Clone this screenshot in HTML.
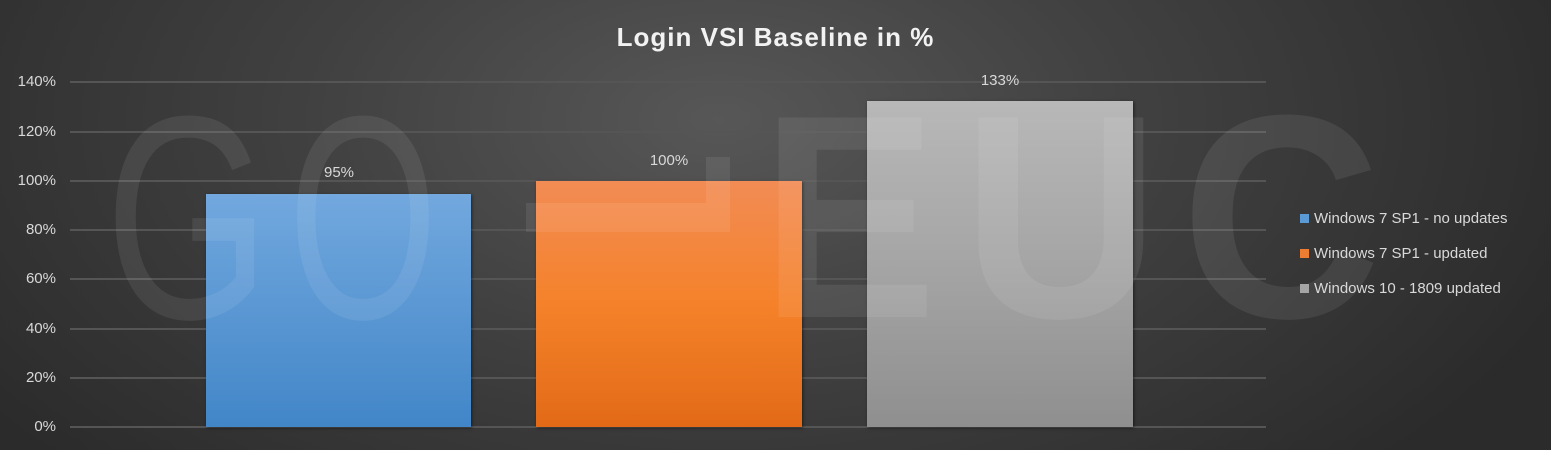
<!DOCTYPE html>
<html><head><meta charset="utf-8"><style>
body{margin:0;width:1551px;height:450px;overflow:hidden;font-family:"Liberation Sans",sans-serif}
#c{position:relative;width:1551px;height:450px;background:radial-gradient(ellipse 900px 500px at 720px 120px,#575757 0%,#414141 45%,#2b2b2b 100%)}
.g{position:absolute;left:70px;width:1196px;height:2px;background:#555}
.y{position:absolute;left:0;width:56px;text-align:right;color:#d9d9d9;font-size:15px}
.b{position:absolute;box-shadow:1px 1px 3px rgba(0,0,0,.5)}
.l{position:absolute;color:#d9d9d9;font-size:15px;text-align:center;width:266px}
.lg{position:absolute;left:1300px;color:#d9d9d9;font-size:15px}
.lg i{display:inline-block;width:9px;height:9px;margin-right:5px;vertical-align:0}
</style></head><body><div id="c">
<div style="position:absolute;left:0;top:22px;width:1551px;text-align:center;color:#f2f2f2;font-size:26px;font-weight:bold;letter-spacing:1px">Login VSI Baseline in %</div>
<div class="g" style="top:81px"></div><div class="g" style="top:131px"></div><div class="g" style="top:180px"></div><div class="g" style="top:229px"></div><div class="g" style="top:278px"></div><div class="g" style="top:328px"></div><div class="g" style="top:377px"></div><div class="g" style="top:426px"></div>
<div class="y" style="top:73px">140%</div><div class="y" style="top:123px">120%</div><div class="y" style="top:172px">100%</div><div class="y" style="top:221px">80%</div><div class="y" style="top:270px">60%</div><div class="y" style="top:320px">40%</div><div class="y" style="top:369px">20%</div><div class="y" style="top:418px">0%</div>
<div class="b" style="left:206px;top:194px;width:265px;height:233px;background:linear-gradient(#72a8de,#4286c8)"></div>
<div class="b" style="left:536px;top:181px;width:266px;height:246px;background:linear-gradient(#f28c55,#f5822a 50%,#e26a17)"></div>
<div class="b" style="left:867px;top:101px;width:266px;height:326px;background:linear-gradient(#b8b8b8,#a5a5a5 50%,#8f8f8f)"></div>
<svg style="position:absolute;left:0;top:0" width="1551" height="450"><g fill="#fff" fill-opacity="0.08" font-family="Liberation Sans" font-size="290">
<text x="105" y="318" textLength="165" lengthAdjust="spacingAndGlyphs">G</text>
<text x="288" y="318" textLength="150" lengthAdjust="spacingAndGlyphs">O</text>
<rect x="526" y="203" width="204" height="29"/><rect x="706" y="157" width="24" height="46"/>
<g font-weight="bold"><text x="761" y="317" textLength="176" lengthAdjust="spacingAndGlyphs">E</text>
<text x="962" y="317" textLength="198" lengthAdjust="spacingAndGlyphs">U</text>
<text x="1181" y="317" textLength="200" lengthAdjust="spacingAndGlyphs">C</text></g></g></svg>
<div class="l" style="left:206px;top:164px">95%</div>
<div class="l" style="left:536px;top:152px">100%</div>
<div class="l" style="left:867px;top:72px">133%</div>
<div class="lg" style="top:210px"><i style="background:#5b9bd5"></i>Windows 7 SP1 - no updates</div>
<div class="lg" style="top:245px"><i style="background:#ed7d31"></i>Windows 7 SP1 - updated</div>
<div class="lg" style="top:280px"><i style="background:#a5a5a5"></i>Windows 10 - 1809 updated</div>
</div></body></html>
